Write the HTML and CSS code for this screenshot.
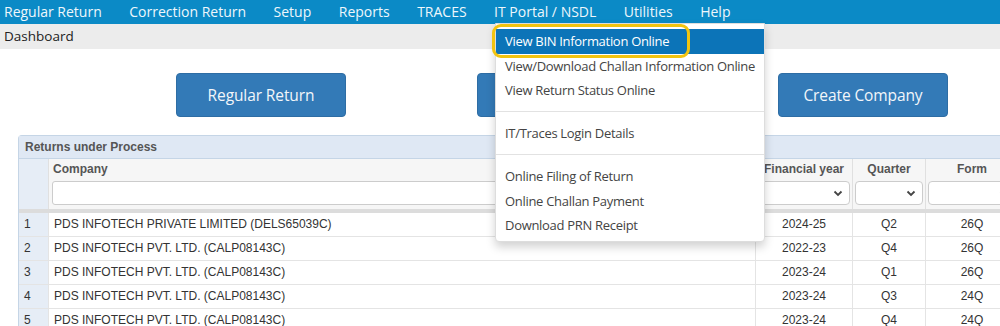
FILE: index.html
```html
<!DOCTYPE html>
<html>
<head>
<meta charset="utf-8">
<link rel="stylesheet" href="styles.css">
</head>
<body>
<div class="nav">
  <span class="nav-item">Regular Return</span>
  <span class="nav-item">Correction Return</span>
  <span class="nav-item">Setup</span>
  <span class="nav-item">Reports</span>
  <span class="nav-item">TRACES</span>
  <span class="nav-item">IT Portal / NSDL</span>
  <span class="nav-item">Utilities</span>
  <span class="nav-item">Help</span>
</div>
<div class="crumb">Dashboard</div>
<div class="buttons">
  <div class="btn">Regular Return</div>
  <div class="btn">Correction Return</div>
  <div class="btn">Create Company</div>
</div>
<div class="panel">
  <div class="panel-title">Returns under Process</div>
  <div class="grid head">
    <div class="c rn"></div>
    <div class="c company"><div class="lbl">Company</div><div class="inp"></div></div>
    <div class="c fy"><div class="lbl ctr">Financial year</div><div class="sel"><svg width="10" height="7" viewBox="0 0 10 7"><path d="M1.5 1.5 L5 5 L8.5 1.5" fill="none" stroke="#444" stroke-width="1.8"/></svg></div></div>
    <div class="c qt"><div class="lbl ctr">Quarter</div><div class="sel"><svg width="10" height="7" viewBox="0 0 10 7"><path d="M1.5 1.5 L5 5 L8.5 1.5" fill="none" stroke="#444" stroke-width="1.8"/></svg></div></div>
    <div class="c fm"><div class="lbl ctr">Form</div><div class="sel"><svg width="10" height="7" viewBox="0 0 10 7"><path d="M1.5 1.5 L5 5 L8.5 1.5" fill="none" stroke="#444" stroke-width="1.8"/></svg></div></div>
  </div>
  <div class="grid row"><div class="c rn">1</div><div class="c company">PDS INFOTECH PRIVATE LIMITED (DELS65039C)</div><div class="c fy ctr">2024-25</div><div class="c qt ctr">Q2</div><div class="c fm ctr">26Q</div></div>
  <div class="grid row"><div class="c rn">2</div><div class="c company">PDS INFOTECH PVT. LTD. (CALP08143C)</div><div class="c fy ctr">2022-23</div><div class="c qt ctr">Q4</div><div class="c fm ctr">26Q</div></div>
  <div class="grid row"><div class="c rn">3</div><div class="c company">PDS INFOTECH PVT. LTD. (CALP08143C)</div><div class="c fy ctr">2023-24</div><div class="c qt ctr">Q1</div><div class="c fm ctr">26Q</div></div>
  <div class="grid row"><div class="c rn">4</div><div class="c company">PDS INFOTECH PVT. LTD. (CALP08143C)</div><div class="c fy ctr">2023-24</div><div class="c qt ctr">Q3</div><div class="c fm ctr">24Q</div></div>
  <div class="grid row"><div class="c rn">5</div><div class="c company">PDS INFOTECH PVT. LTD. (CALP08143C)</div><div class="c fy ctr">2023-24</div><div class="c qt ctr">Q4</div><div class="c fm ctr">24Q</div></div>
</div>

<div class="menu">
  <div class="mi active">View BIN Information Online</div>
  <div class="mi">View/Download Challan Information Online</div>
  <div class="mi">View Return Status Online</div>
  <div class="sep"></div>
  <div class="mi">IT/Traces Login Details</div>
  <div class="sep"></div>
  <div class="mi">Online Filing of Return</div>
  <div class="mi">Online Challan Payment</div>
  <div class="mi">Download PRN Receipt</div>
</div>
<div class="ring"></div>
</body>
</html>
```
FILE: styles.css
```css
html, body {
  margin: 0;
  padding: 0;
  width: 1000px;
  height: 326px;
  overflow: hidden;
  background: #fff;
  font-family: "Open Sans", "Noto Sans", sans-serif;
}
.nav {
  height: 24px;
  background: #0b8ac6;
  display: flex;
  align-items: center;
  padding-left: 4px;
}
.nav-item {
  color: #eef7fc;
  font-size: 14px;
  margin-right: 27.5px;
  line-height: 24px;
  white-space: nowrap;
}
.crumb {
  height: 25px;
  background: #ececec;
  color: #222;
  font-size: 13.5px;
  line-height: 25px;
  padding-left: 4px;
}
.buttons {
  display: flex;
  padding: 24px 0 0 176px;
  gap: 131px;
}
.btn {
  width: 170px;
  height: 44px;
  flex: none;
  background: #337ab7;
  border: 1px solid #2e6da4;
  box-sizing: border-box;
  border-radius: 4px;
  color: #f2f6fa;
  font-size: 15.5px;
  letter-spacing: -0.1px;
  display: flex;
  align-items: center;
  justify-content: center;
}
.panel {
  margin: 18px 0 0 18px;
  width: 1000px;
  border: 1px solid #c5d5e6;
  border-right: none;
  border-radius: 4px 0 0 0;
  font-family: "Liberation Sans", Arial, sans-serif;
  font-size: 12px;
}
.panel-title {
  height: 22px;
  line-height: 22px;
  background: #dfe8f4;
  color: #555;
  font-weight: bold;
  padding-left: 6px;
  border-bottom: 1px solid #c5d5e6;
}
.grid {
  display: grid;
  grid-template-columns: 30px 707px 97px 73px 93px;
}
.head {
  height: 50px;
  background: #f6f6f6;
  border-bottom: 4px solid #dcdcdc;
}
.head .rn { background: #e6edf6; }
.head .c { border-right: 1px solid #e0e0e0; }
.lbl {
  color: #555;
  font-weight: bold;
  height: 22px;
  line-height: 20px;
  padding-left: 4px;
}
.lbl.ctr { text-align: center; padding-left: 0; }
.inp {
  margin: 0 3px 0 3px;
  height: 22px;
  background: #fff;
  border: 1px solid #ccc;
  border-radius: 3px;
}
.sel {
  margin: 0 2px;
  height: 22px;
  background: #fff;
  border: 1px solid #ccc;
  border-radius: 4px;
  display: flex;
  align-items: center;
  justify-content: flex-end;
  padding-right: 6px;
}
.row {
  height: 24px;
  border-bottom: 1px solid #e4e4e4;
  box-sizing: border-box;
  color: #333;
}
.row .c {
  line-height: 23px;
  padding-left: 5px;
  border-right: 1px solid #e4e4e4;
  white-space: nowrap;
}
.row .rn { background: #e6edf6; padding-left: 5px; }
.row .ctr { text-align: center; padding-left: 0; }
.menu {
  position: absolute;
  left: 495px;
  top: 23px;
  width: 268px;
  padding: 5px 0 3px;
  background: #fff;
  border: 1px solid #ddd;
  border-radius: 0 0 4px 4px;
  box-shadow: 0 5px 10px rgba(0,0,0,0.18);
  font-family: "Open Sans", "Noto Sans", sans-serif;
  font-size: 13px;
  letter-spacing: -0.3px;
}
.mi {
  height: 24.5px;
  line-height: 24px;
  padding-left: 9px;
  color: #444;
  white-space: nowrap;
}
.mi.active {
  background: #0c74b8;
  color: #fff;
}
.sep {
  height: 1px;
  background: #e2e2e2;
  margin: 8.5px 0 9px;
}
.ring {
  position: absolute;
  left: 492px;
  top: 24px;
  width: 192px;
  height: 28px;
  border: 3px solid #f2c40f;
  border-radius: 9px;
}
```
